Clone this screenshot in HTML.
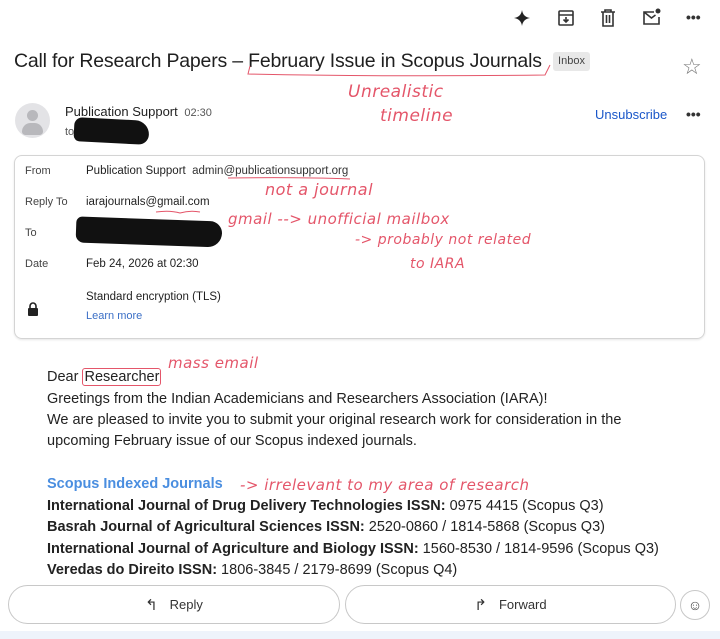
<!DOCTYPE html>
<html><head><meta charset="utf-8"><style>
*{margin:0;padding:0;box-sizing:border-box}
body{width:720px;height:639px;background:#fff;font-family:"Liberation Sans",sans-serif;color:#1f1f1f;position:relative;overflow:hidden}
.a{position:absolute;white-space:nowrap}
.hw{position:absolute;white-space:nowrap;color:#e4566a;font-family:"DejaVu Sans",sans-serif;font-style:italic;font-weight:200;letter-spacing:0.5px}
.lbl{font-size:11px;color:#444}
.val{font-size:11.5px;color:#1f1f1f}
.body{font-size:14.5px;color:#222}
.btn{position:absolute;border:1px solid #c8c8c8;border-radius:21px;height:39px;top:585px;font-size:13px;color:#333;display:flex;align-items:center;justify-content:center;gap:12px}
</style></head><body>
<svg class="a" style="left:512px;top:8px" width="20" height="20" viewBox="0 0 20 20"><path d="M10 2 Q11 9 18 10 Q11 11 10 18 Q9 11 2 10 Q9 9 10 2Z" fill="#222"/></svg>
<svg class="a" style="left:557px;top:9px" width="18" height="18" viewBox="0 0 18 18" fill="none" stroke="#333" stroke-width="1.6"><rect x="2" y="2" width="14" height="14" rx="1"/><path d="M2 6h14M9 8v5M6.5 10.5 9 13l2.5-2.5"/></svg>
<svg class="a" style="left:600px;top:9px" width="16" height="18" viewBox="0 0 16 18" fill="none" stroke="#333" stroke-width="1.6"><path d="M1 3h14M5 3V1h6v2M3 3v14h10V3M6.5 6v8M9.5 6v8"/></svg>
<svg class="a" style="left:642px;top:7px" width="20" height="20" viewBox="0 0 20 20" fill="none" stroke="#333" stroke-width="1.6"><path d="M12 5H2v12h15V10M2 5l7.5 6 4-3"/><circle cx="16" cy="4" r="2.5" fill="#333" stroke="none"/></svg>
<div class="a" style="left:686px;top:9px;font-size:14px;font-weight:bold;color:#333">•••</div>
<div class="a" style="left:14px;top:50px;font-size:19.5px;letter-spacing:-0.2px;color:#1f1f1f">Call for Research Papers – February Issue in Scopus Journals</div>
<div class="a" style="left:553px;top:52px;width:37px;height:19px;background:#e8e8e8;border-radius:3px;font-size:11px;line-height:19px;text-align:center;color:#444">Inbox</div>
<div class="a" style="left:682px;top:54px;font-size:22px;color:#777">☆</div>
<svg class="a" style="left:240px;top:62px" width="320" height="20"><path d="M10 4 L8 12 Q150 15 305 13 L310 3" fill="none" stroke="#e4566a" stroke-width="1"/></svg>
<div class="hw" style="left:348px;top:82px;font-size:17px">Unrealistic</div>
<div class="hw" style="left:380px;top:106px;font-size:17px">timeline</div>
<div class="a" style="left:15px;top:103px;width:35px;height:35px;border-radius:50%;background:#e3e3e6;overflow:hidden"><div style="position:absolute;left:12px;top:7px;width:11px;height:11px;border-radius:50%;background:#b8b8bc"></div><div style="position:absolute;left:7px;top:20px;width:21px;height:12px;border-radius:10px 10px 4px 4px;background:#b8b8bc"></div></div>
<div class="a" style="left:65px;top:104px;font-size:13px">Publication Support <span style="font-size:11px;color:#555;margin-left:3px">02:30</span></div>
<div class="a" style="left:65px;top:126px;font-size:11px;color:#555">to</div>
<div class="a" style="left:142px;top:125px;font-size:11px;color:#555">^</div>
<div class="a" style="left:74px;top:119px;width:75px;height:24px;background:#111;border-radius:8px 14px 10px 6px;transform:rotate(3deg)"></div>
<div class="a" style="left:595px;top:107px;font-size:13px;color:#1a57c9">Unsubscribe</div>
<div class="a" style="left:686px;top:106px;font-size:14px;font-weight:bold;color:#333">•••</div>
<div class="a" style="left:14px;top:155px;width:691px;height:184px;border:1px solid #d4d4d4;border-radius:8px;box-shadow:0 1px 2px rgba(0,0,0,.1)"></div>
<div class="a lbl" style="left:25px;top:165px">From</div>
<div class="a val" style="left:86px;top:165px">Publication Support &nbsp;<span style="color:#333">admin@publicationsupport.org</span></div>
<div class="a lbl" style="left:25px;top:196px">Reply To</div>
<div class="a val" style="left:86px;top:196px">iarajournals@gmail.com</div>
<div class="a lbl" style="left:25px;top:227px">To</div>
<div class="a" style="left:76px;top:219px;width:146px;height:26px;background:#111;border-radius:6px 12px 14px 8px;transform:rotate(2deg)"></div>
<div class="a lbl" style="left:25px;top:258px">Date</div>
<div class="a val" style="left:86px;top:258px">Feb 24, 2026 at 02:30</div>
<div class="a val" style="left:86px;top:291px">Standard encryption (TLS)</div>
<div class="a" style="left:86px;top:310px;font-size:11px;color:#3b6fc6">Learn more</div>
<svg class="a" style="left:27px;top:302px" width="12" height="14" viewBox="0 0 12 14"><path d="M3 6V4a3 3 0 0 1 6 0v2" fill="none" stroke="#222" stroke-width="1.6"/><rect x="1" y="6" width="10" height="8" rx="1" fill="#222"/></svg>
<svg class="a" style="left:150px;top:170px" width="240" height="50"><path d="M78 8 Q150 7 200 9 M6 42 Q20 40 30 43 Q40 40 50 42" fill="none" stroke="#e4566a" stroke-width="1"/></svg>
<div class="hw" style="left:265px;top:180px;font-size:16px">not a journal</div>
<div class="hw" style="left:228px;top:210px;font-size:15px">gmail --&gt; unofficial mailbox</div>
<div class="hw" style="left:355px;top:232px;font-size:14px">-&gt; probably not related</div>
<div class="hw" style="left:410px;top:256px;font-size:14px">to IARA</div>
<div class="a body" style="left:47px;top:369px">Dear <span style="border:1px solid #e4566a;border-radius:3px;padding:0 1px">Researcher</span></div>
<div class="hw" style="left:168px;top:354px;font-size:15px">mass email</div>
<div class="a body" style="left:47px;top:391px">Greetings from the Indian Academicians and Researchers Association (IARA)!</div>
<div class="a body" style="left:47px;top:412px">We are pleased to invite you to submit your original research work for consideration in the</div>
<div class="a body" style="left:47px;top:433px">upcoming February issue of our Scopus indexed journals.</div>
<div class="a body" style="left:47px;top:476px;color:#4a8ee0;font-weight:bold">Scopus Indexed Journals</div>
<div class="hw" style="left:240px;top:476px;font-size:15px">-&gt; irrelevant to my area of research</div>
<div class="a body" style="left:47px;top:498px"><b>International Journal of Drug Delivery Technologies ISSN:</b> 0975 4415 (Scopus Q3)</div>
<div class="a body" style="left:47px;top:519px"><b>Basrah Journal of Agricultural Sciences ISSN:</b> 2520-0860 / 1814-5868 (Scopus Q3)</div>
<div class="a body" style="left:47px;top:541px"><b>International Journal of Agriculture and Biology ISSN:</b> 1560-8530 / 1814-9596 (Scopus Q3)</div>
<div class="a body" style="left:47px;top:562px"><b>Veredas do Direito ISSN:</b> 1806-3845 / 2179-8699 (Scopus Q4)</div>
<div class="btn" style="left:8px;width:332px"><span style="font-size:15px">↰</span>Reply</div>
<div class="btn" style="left:345px;width:331px"><span style="font-size:15px">↱</span>Forward</div>
<div class="a" style="left:680px;top:590px;width:30px;height:30px;border:1px solid #c8c8c8;border-radius:50%;text-align:center;line-height:28px;font-size:14px;color:#444">☺</div>
<div class="a" style="left:0;top:631px;width:720px;height:8px;background:#eef3fb"></div>
</body></html>
